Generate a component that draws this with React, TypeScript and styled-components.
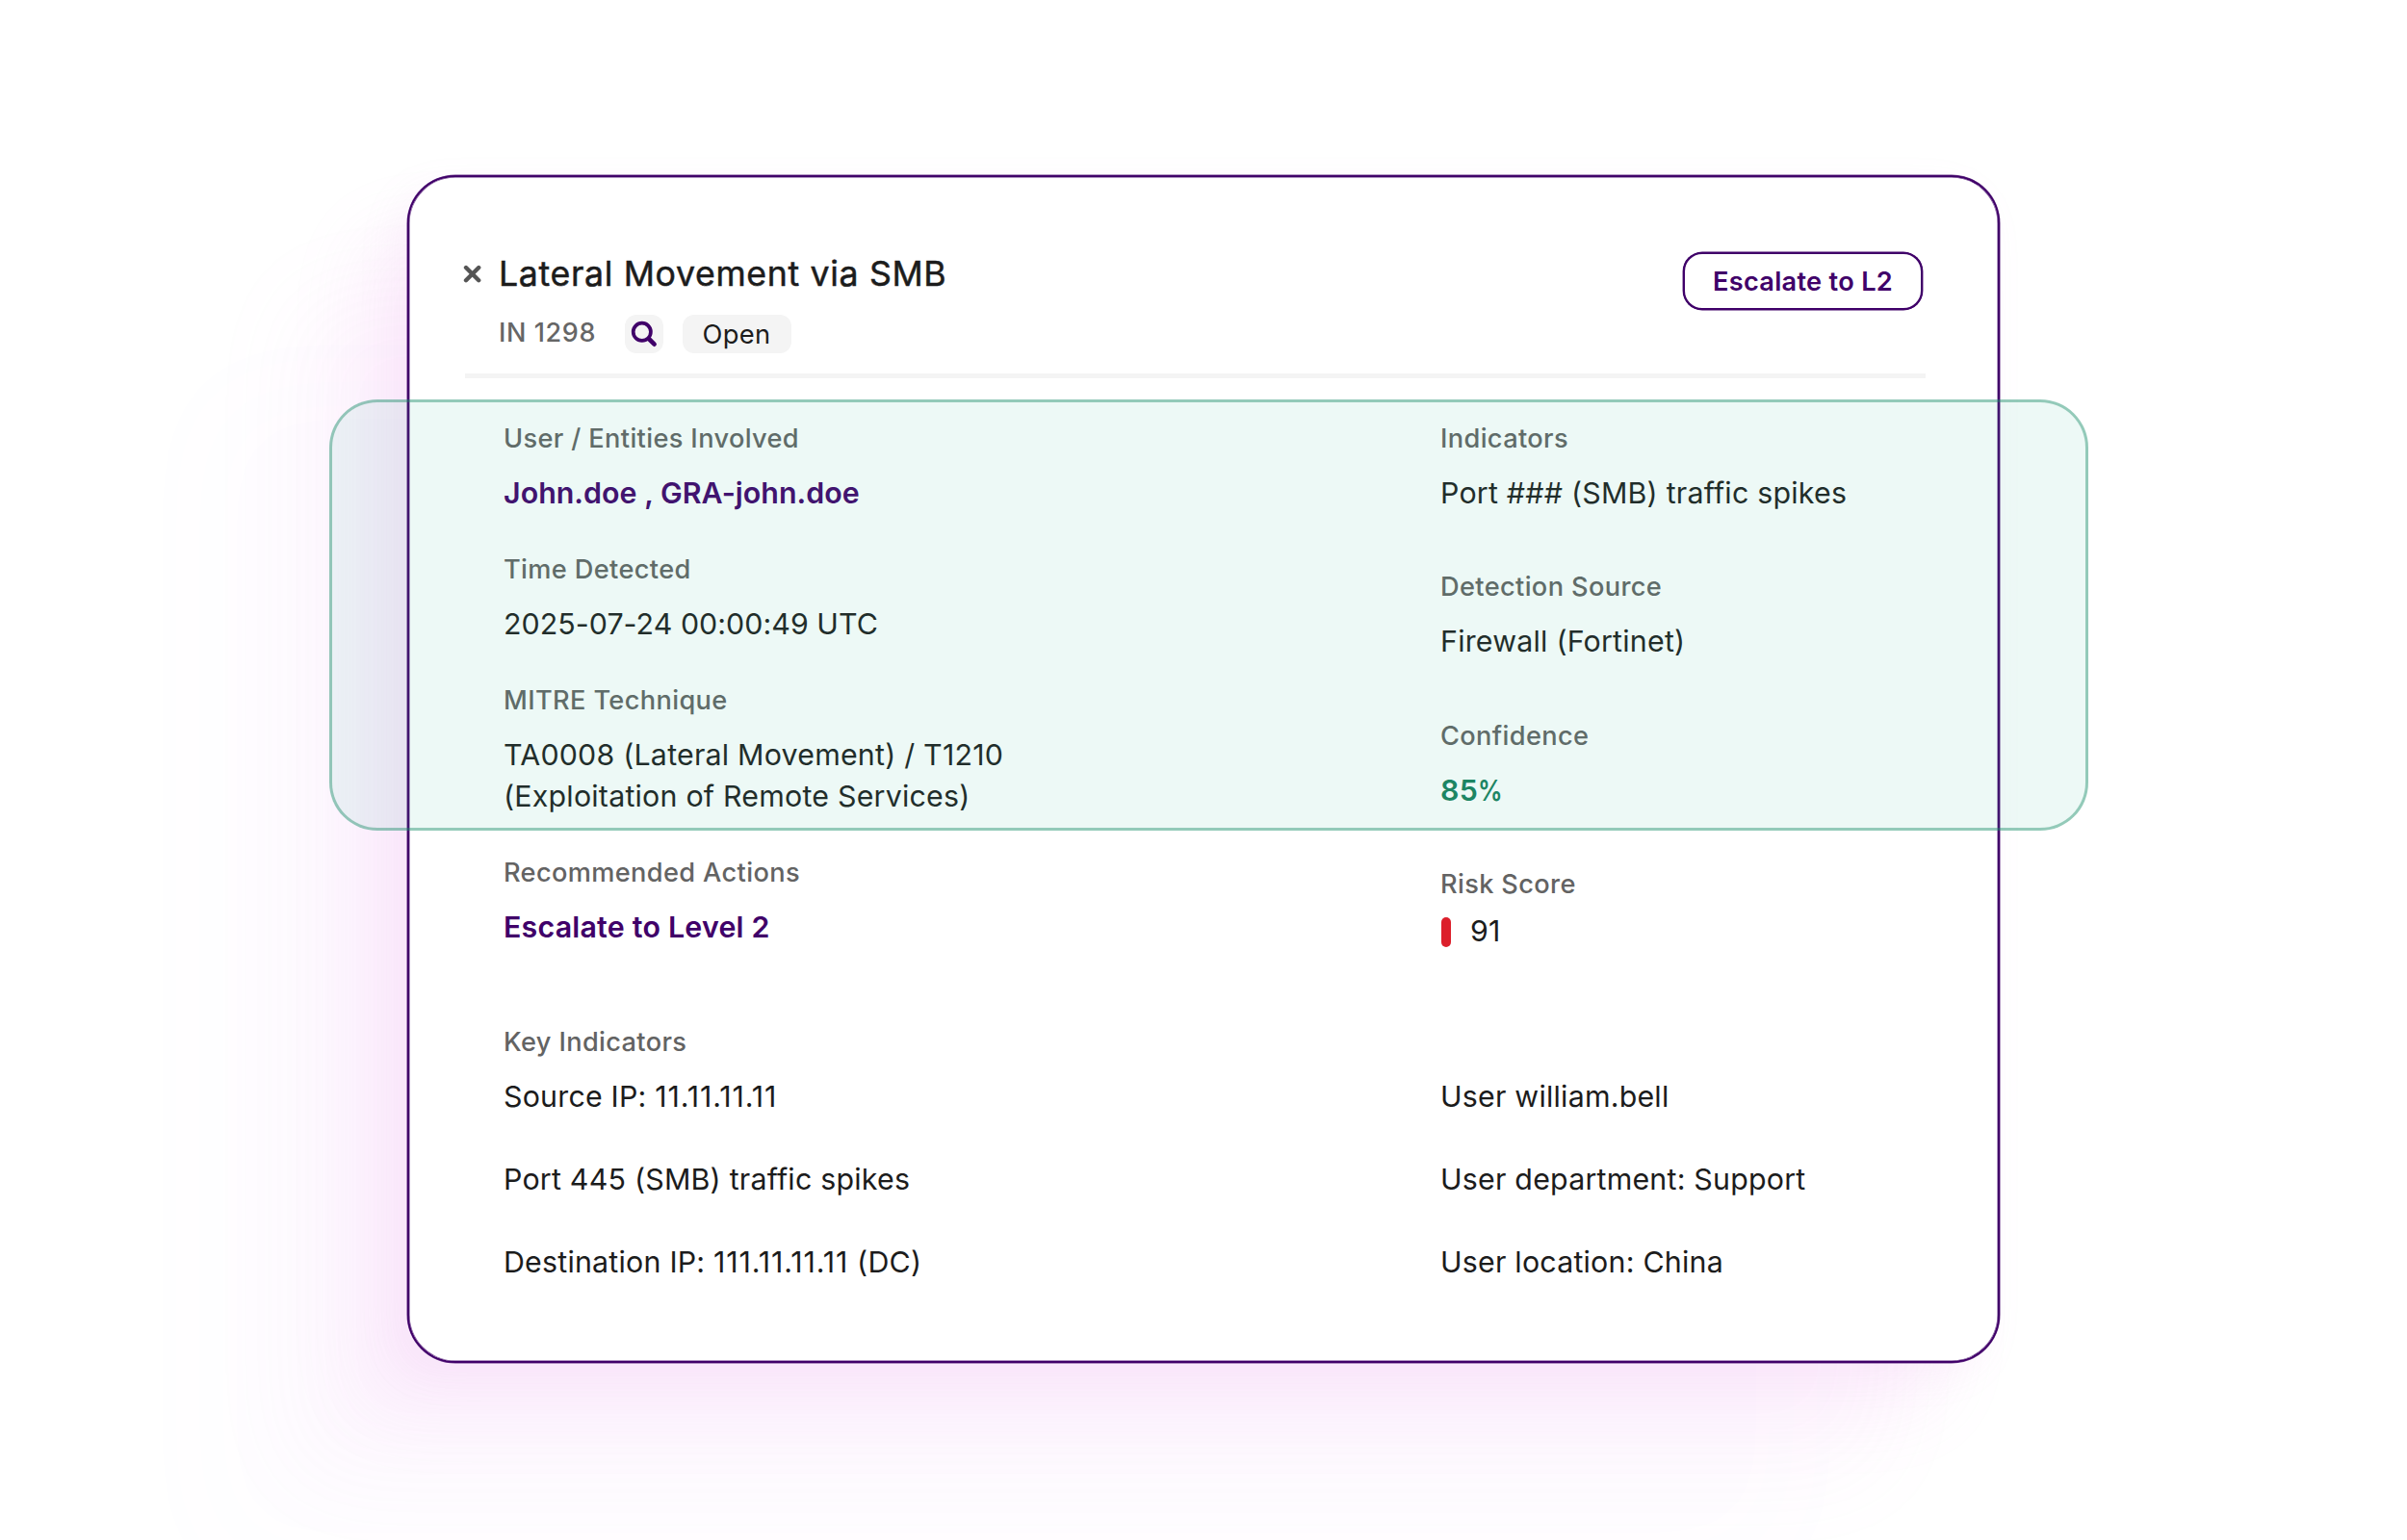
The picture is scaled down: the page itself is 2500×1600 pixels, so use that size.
import React from 'react';
import styled, { createGlobalStyle } from 'styled-components';

const PURPLE = '#400069';

const GlobalStyle = createGlobalStyle`
  * { box-sizing: border-box; }
  body {
    margin: 0;
    background: #fff;
    font-family: Inter, "Liberation Sans", sans-serif;
    color: #1c1c1c;
  }
`;

const Page = styled.main`
  width: 2500px;
  height: 1600px;
  padding: 182px 0 0 423px;
  overflow: hidden;
`;

const Card = styled.article`
  position: relative;
  width: 1654px;
  height: 1234px;
  padding: 78px 75px 0 58px;
  border: 2px solid ${PURPLE};
  border-radius: 50px;
  background: #fff;
  box-shadow:
    0 0 0 0.5px rgba(64, 0, 105, 0.8),
    inset 0 0 0 0.5px rgba(64, 0, 105, 0.8),
    -14px 14px 40px rgba(215, 140, 220, 0.08),
    -55px 55px 73px rgba(232, 130, 228, 0.09),
    -120px 120px 98px rgba(228, 130, 230, 0.05),
    -215px 215px 116px rgba(220, 130, 225, 0.015);
`;

const Header = styled.header`
  display: flex;
  justify-content: space-between;
  align-items: flex-start;
  height: 131px;
  border-bottom: 5px solid #f4f4f4;
`;

const Heading = styled.div`
  display: grid;
  grid-template-columns: 35px auto;
  row-gap: 21px;
`;

const CloseButton = styled.button`
  display: flex;
  align-items: center;
  height: 44px;
  margin-left: -2.3px;
  padding: 1px 0 0;
  border: 0;
  background: none;
`;

const Title = styled.h1`
  margin: 0;
  padding-top: 1px;
  font-size: 35.7px;
  font-weight: 400;
  line-height: 43px;
  letter-spacing: 0.65px;
  -webkit-text-stroke: 0.5px currentColor;
`;

const Meta = styled.div`
  grid-column: 2;
  display: flex;
  align-items: center;
  height: 40px;
`;

const IncidentId = styled.span`
  width: 131px;
  padding-bottom: 4px;
  color: #666;
  font-size: 27px;
  font-weight: 500;
  letter-spacing: 0.6px;
`;

const SearchChip = styled.button`
  width: 40px;
  height: 40px;
  margin-right: 20px;
  padding: 0;
  border: 0;
  border-radius: 12px;
  background: #f4f4f4;
`;

const StatusChip = styled.span`
  width: 113px;
  height: 40px;
  padding: 1px 1px 0 0;
  border-radius: 12px;
  background: #f4f4f4;
  font-size: 27.3px;
  line-height: 40px;
  letter-spacing: 0.4px;
  text-align: center;
`;

const EscalateButton = styled.button`
  width: 249px;
  height: 60px;
  margin-right: 3px;
  padding: 1px 0 0;
  border: 2px solid ${PURPLE};
  border-radius: 20px;
  box-shadow: 0 0 0 0.4px ${PURPLE};
  background: #fff;
  color: ${PURPLE};
  font: 600 27.2px/56px Inter, "Liberation Sans", sans-serif;
  letter-spacing: 0.28px;
`;

const Body = styled.div`
  display: grid;
  grid-template-columns: 973px 1fr;
  padding: 41px 0 0 40px;
`;

const Column = styled.div<{ $gap: number }>`
  display: flex;
  flex-direction: column;
  gap: ${(p) => p.$gap}px;
`;

const Field = styled.section<{ $gap?: number }>`
  display: flex;
  flex-direction: column;
  gap: ${(p) => p.$gap ?? 14}px;
`;

const Label = styled.h2`
  margin: 0;
  color: #636363;
  font-size: 27.2px;
  font-weight: 500;
  line-height: 43px;
  letter-spacing: 0.36px;
`;

const Value = styled.p<{ $tone?: string; $track?: number }>`
  margin: 0;
  color: ${(p) => p.$tone ?? 'inherit'};
  font-size: 30.36px;
  font-weight: ${(p) => (p.$tone ? 600 : 400)};
  line-height: 43px;
  letter-spacing: ${(p) => p.$track ?? 0.21}px;
  white-space: nowrap;
`;

const Address = styled.span`
  letter-spacing: 0.9px;
`;

const Percent = styled.span`
  display: inline-block;
  transform: scaleX(0.84);
  transform-origin: left;
`;

const KeyGrid = styled.section`
  display: grid;
  grid-template-columns: 973px 1fr;
  row-gap: 42.7px;
  padding: 14px 0 0 40px;
`;

const KeyLabel = styled(Label)`
  padding: 72px 0 0 40px;
`;

const Score = styled.div`
  display: flex;
  align-items: center;
  gap: 20px;
`;

const RiskBar = styled.span`
  width: 10px;
  height: 31px;
  margin: 1px 0 0 1px;
  border-radius: 5px;
  background: #dc1f2b;
`;

const Highlight = styled.div`
  position: absolute;
  top: 231px;
  left: -83px;
  width: 1827px;
  height: 448px;
  border: 3px solid rgba(30, 144, 108, 0.48);
  border-radius: 50px;
  background: rgba(75, 200, 165, 0.1);
  background-clip: padding-box;
  pointer-events: none;
`;

export default function App() {
  return (
    <>
      <GlobalStyle />
      <Page>
        <Card>
          <Header>
            <Heading>
              <CloseButton aria-label="Close">
                <svg width="20" height="20" viewBox="0 0 20 20" fill="none" stroke="#555" strokeWidth="4.4" strokeLinecap="round">
                  <path d="M3 3 16.2 16.2M16.2 3 3 16.2" />
                </svg>
              </CloseButton>
              <Title>Lateral Movement via SMB</Title>
              <Meta>
                <IncidentId>IN 1298</IncidentId>
                <SearchChip aria-label="Search">
                  <svg width="40" height="40" viewBox="0 0 40 40" fill="none" stroke={PURPLE} strokeLinecap="round">
                    <circle cx="17.8" cy="17.8" r="9.1" strokeWidth="3.7" />
                    <path d="M24.9 25 30.6 30.7" strokeWidth="4.6" />
                  </svg>
                </SearchChip>
                <StatusChip>Open</StatusChip>
              </Meta>
            </Heading>
            <EscalateButton>Escalate to L2</EscalateButton>
          </Header>

          <Body>
            <Column $gap={36}>
              <Field>
                <Label>User / Entities Involved</Label>
                <Value $tone={PURPLE} $track={0.03}>John.doe , GRA-john.doe</Value>
              </Field>
              <Field>
                <Label>Time Detected</Label>
                <Value $track={0.04}>2025-07-24 00:00:49 UTC</Value>
              </Field>
              <Field>
                <Label>MITRE Technique</Label>
                <Value>
                  TA0008 (Lateral Movement) / T1210
                  <br />
                  (Exploitation of Remote Services)
                </Value>
              </Field>
              <Field>
                <Label>Recommended Actions</Label>
                <Value $tone={PURPLE}>Escalate to Level 2</Value>
              </Field>
            </Column>
            <Column $gap={54.3}>
              <Field>
                <Label>Indicators</Label>
                <Value>Port ### (SMB) traffic spikes</Value>
              </Field>
              <Field>
                <Label>Detection Source</Label>
                <Value>Firewall (Fortinet)</Value>
              </Field>
              <Field>
                <Label>Confidence</Label>
                <Value $tone="#187e5c" $track={0.4}>
                  85<Percent>%</Percent>
                </Value>
              </Field>
              <Field $gap={6.4}>
                <Label>Risk Score</Label>
                <Score>
                  <RiskBar />
                  <Value>91</Value>
                </Score>
              </Field>
            </Column>
          </Body>

          <KeyLabel>Key Indicators</KeyLabel>
          <KeyGrid>
            <Value>
              Source IP: <Address>11.11.11.11</Address>
            </Value>
            <Value>User william.bell</Value>
            <Value>Port 445 (SMB) traffic spikes</Value>
            <Value>User department: Support</Value>
            <Value>
              Destination IP: <Address>111.11.11.11</Address> (DC)
            </Value>
            <Value>User location: China</Value>
          </KeyGrid>

          <Highlight />
        </Card>
      </Page>
    </>
  );
}
